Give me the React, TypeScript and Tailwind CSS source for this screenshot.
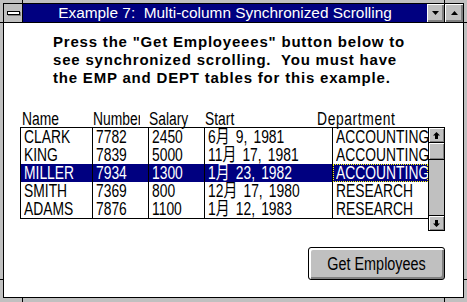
const rows = [
  { name: "CLARK", num: "7782", sal: "2450", start: "6月 9, 1981", dept: "ACCOUNTING" },
  { name: "KING", num: "7839", sal: "5000", start: "11月 17, 1981", dept: "ACCOUNTING" },
  { name: "MILLER", num: "7934", sal: "1300", start: "1月 23, 1982", dept: "ACCOUNTING", sel: true },
  { name: "SMITH", num: "7369", sal: "800", start: "12月 17, 1980", dept: "RESEARCH" },
  { name: "ADAMS", num: "7876", sal: "1100", start: "1月 12, 1983", dept: "RESEARCH" },
];

function Arrow({ up }: { up?: boolean }) {
  return (
    <svg width="7" height="7" viewBox="0 0 7 7" className={up ? "" : "rotate-180"}>
      <path d="M3.5 0 L7 3.5 L5 3.5 L5 7 L2 7 L2 3.5 L0 3.5 Z" fill="#000" />
    </svg>
  );
}

// narrow bitmap-like look: Liberation Sans squeezed horizontally
function Narrow({ children, className = "" }: { children: React.ReactNode; className?: string }) {
  return <span className={`inline-block origin-left scale-x-[0.77] whitespace-pre ${className}`}>{children}</span>;
}

export default function App() {
  return (
    <div className="relative w-[467px] h-[302px] bg-[#c0c0c0] pt-[3px] pl-[3px] pr-[3px] pb-[4px] font-['Liberation_Sans','Noto_Sans_CJK_JP',sans-serif]">
      {/* resize border notches */}
      <div className="absolute left-[22px] top-0 w-px h-[3px] bg-black" />
      <div className="absolute left-[444px] top-0 w-px h-[3px] bg-black" />
      <div className="absolute left-[22px] bottom-0 w-px h-[4px] bg-black" />
      <div className="absolute left-[444px] bottom-0 w-px h-[4px] bg-black" />
      <div className="absolute left-0 top-[22px] w-[3px] h-px bg-black" />
      <div className="absolute right-0 top-[22px] w-[3px] h-px bg-black" />
      <div className="absolute left-0 top-[279px] w-[3px] h-px bg-black" />
      <div className="absolute right-0 top-[279px] w-[3px] h-px bg-black" />

      <div className="h-full border border-black flex flex-col">
        {/* title bar */}
        <div className="flex h-[19px] border-b border-black">
          <div className="w-[19px] border-r border-black bg-[#c0c0c0] flex items-center justify-center">
            <div className="w-[13px] h-[4px] bg-white border border-black shadow-[1px_1px_0_#808080]" />
          </div>
          <div className="flex-1 bg-[#000080] text-white text-[15.4px] leading-[18px] text-center whitespace-pre">
            Example 7:  Multi-column Synchronized Scrolling
          </div>
          <div className="w-[18px] border-r border-black bg-[#c0c0c0] shadow-[inset_1px_1px_0_#fff,inset_-2px_-2px_0_#808080] flex items-center justify-center">
            <svg width="7" height="4" viewBox="0 0 7 4">
              <path d="M0 0 H7 L3.5 4 Z" fill="#000" />
            </svg>
          </div>
          <div className="w-[18px] bg-[#c0c0c0] shadow-[inset_1px_1px_0_#fff,inset_-2px_-2px_0_#808080] flex items-center justify-center">
            <svg width="7" height="4" viewBox="0 0 7 4">
              <path d="M0 4 H7 L3.5 0 Z" fill="#000" />
            </svg>
          </div>
        </div>

        {/* client area */}
        <div className="flex-1 bg-white flex flex-col">
          <div className="pt-[10px] pl-[49px] text-[15px] leading-[18px] font-bold tracking-[0.8px] text-black whitespace-pre">
            <div>Press the "Get Employeees" button below to</div>
            <div>see synchronized scrolling.  You must have</div>
            <div>the EMP and DEPT tables for this example.</div>
          </div>

          <div className="ml-[16px] w-[425px] text-[18px] text-black">
            {/* headers */}
            <div className="mt-[20px] flex h-[20px] leading-[24px] whitespace-nowrap">
              <div className="w-[72px] pl-[2px]"><Narrow className="underline decoration-1 underline-offset-[2px]">Name</Narrow></div>
              <div className="w-[47px] ml-[1px] overflow-hidden"><Narrow className="underline decoration-1 underline-offset-[2px]">Number</Narrow></div>
              <div className="w-[56px] ml-[9px]"><Narrow className="underline decoration-1 underline-offset-[2px]">Salary</Narrow></div>
              <div className="w-[112px]"><Narrow className="underline decoration-1 underline-offset-[2px]">Start</Narrow></div>
              <div><Narrow className="underline decoration-1 underline-offset-[2px] tracking-[0.8px]">Department</Narrow></div>
            </div>

            {/* lists + scrollbar */}
            <div className="flex items-start">
              <div className="grid grid-cols-[72px_56px_56px_128px_95px] border-l border-t border-b border-black">
                {rows.map((r) => {
                  const cell = `h-[18px] leading-[18px] pl-[3px] overflow-hidden whitespace-nowrap ${
                    r.sel ? "bg-[#000080] text-white" : ""
                  }`;
                  return [
                    <div key={r.name + "a"} className={`${cell} border-r border-black`}><Narrow>{r.name}</Narrow></div>,
                    <div key={r.name + "b"} className={`${cell} border-r border-black`}><Narrow>{r.num}</Narrow></div>,
                    <div key={r.name + "c"} className={`${cell} border-r border-black`}><Narrow>{r.sal}</Narrow></div>,
                    <div key={r.name + "d"} className={`${cell} border-r border-black`}>
                      <Narrow className="[word-spacing:3px]">{r.start}</Narrow>
                    </div>,
                    <div
                      key={r.name + "e"}
                      className={`${cell} ${r.sel ? "outline-1 outline-dotted outline-[#ffff00] -outline-offset-1" : ""}`}
                    >
                      <Narrow>{r.dept}</Narrow>
                    </div>,
                  ];
                })}
              </div>

              <div className="w-[17px] h-[104px] border border-black bg-[#c0c0c0] flex flex-col">
                <div className="h-[15px] border-b border-black shadow-[inset_1px_1px_0_#fff,inset_-1px_-1px_0_#808080] flex items-center justify-center">
                  <Arrow up />
                </div>
                <div className="h-[17px] border-b border-black shadow-[inset_1px_1px_0_#fff,inset_-1px_-1px_0_#808080]" />
                <div className="flex-1" />
                <div className="h-[15px] border-t border-black shadow-[inset_1px_1px_0_#fff,inset_-1px_-1px_0_#808080] flex items-center justify-center">
                  <Arrow />
                </div>
              </div>
            </div>

            <div className="mt-[16px] flex justify-end">
              <button className="w-[137px] h-[33px] border border-black rounded-[3px] bg-[#c0c0c0] shadow-[inset_2px_2px_0_#fff,inset_-2px_-2px_0_#808080] text-[18px] text-black leading-none flex items-center justify-center">
                <span className="inline-block scale-x-[0.8] whitespace-pre">Get Employees</span>
              </button>
            </div>
          </div>
        </div>
      </div>
    </div>
  );
}
